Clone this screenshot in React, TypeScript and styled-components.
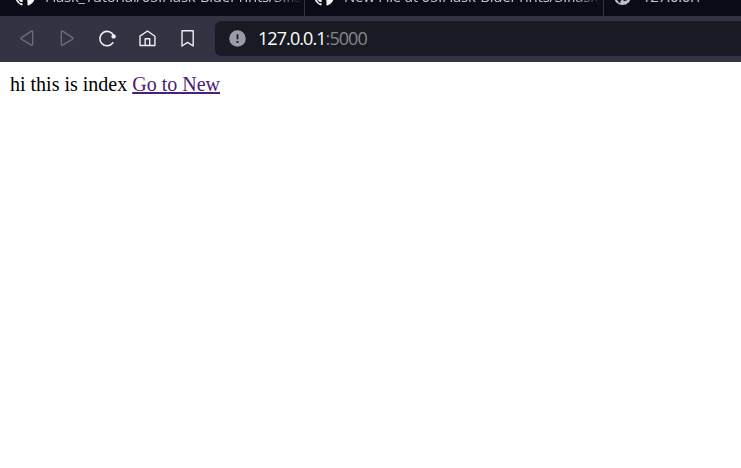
import React from "react";
import styled, { createGlobalStyle } from "styled-components";

const GlobalStyle = createGlobalStyle`
  html, body { margin: 0; height: 100%; overflow: hidden; background: #fff; }
`;

const Browser = styled.div`
  display: flex;
  flex-direction: column;
  height: 468px;
  overflow: hidden;
`;

const TabStrip = styled.div`
  display: flex;
  align-items: flex-end;
  flex: none;
  height: 16px;
  background: #0b0a17;
  overflow: hidden;
`;

const Tab = styled.div<{ $width: number; $pad: number; $gap: number }>`
  box-sizing: border-box;
  flex: none;
  display: flex;
  align-items: center;
  gap: ${(p) => p.$gap}px;
  width: ${(p) => p.$width}px;
  height: 40px;
  padding-left: ${(p) => p.$pad}px;
  border-right: 1px solid #34343f;

  svg { flex: none; }
  &:last-child { border-right: 0; }
`;

const TabTitle = styled.span<{ $width: number; $spacing: number; $fade?: boolean }>`
  width: ${(p) => p.$width}px;
  overflow: hidden;
  white-space: nowrap;
  font: 15px/24px "Open Sans", "Noto Sans", sans-serif;
  letter-spacing: ${(p) => p.$spacing}px;
  color: #c4c4ca;
  mask-image: ${(p) => (p.$fade ? "linear-gradient(to right, #000 calc(100% - 28px), transparent)" : "none")};
`;

const Toolbar = styled.div`
  box-sizing: border-box;
  display: flex;
  align-items: center;
  flex: none;
  height: 46px;
  padding: 5px 0 6px 7px;
  background: #323443;
`;

const ToolButton = styled.button<{ $muted?: boolean }>`
  display: flex;
  align-items: center;
  justify-content: center;
  width: 40px;
  height: 35px;
  padding: 0;
  border: 0;
  background: none;
  color: ${(p) => (p.$muted ? "#6d6f7c" : "#eeeff4")};
`;

const AddressBar = styled.div`
  box-sizing: border-box;
  display: flex;
  align-items: center;
  flex: 1;
  height: 35px;
  margin-left: 8px;
  padding-left: 14px;
  gap: 12px;
  border-radius: 6px 0 0 6px;
  background: #181b23;
`;

const Address = styled.span`
  padding-bottom: 2px;
  font: 18px/24px "Open Sans", "Noto Sans", sans-serif;
  letter-spacing: -0.93px;
  color: #fff;
`;

const Port = styled.span`
  color: #85878b;
`;

const Page = styled.main`
  flex: 1;
  padding: 11px 10px;
  background: #fff;
  color: #000;
  font: 20px/23px "Liberation Serif", serif;
`;

const PageLink = styled.a`
  color: #4b2078;
  text-decoration: underline;
  text-decoration-thickness: 2px;
  text-underline-offset: 1px;
  text-decoration-skip-ink: none;
`;

const GitHubIcon = () => (
  <svg width="20" height="20" viewBox="0 0 16 16" fill="#f5f5f7">
    <path d="M8 0C3.58 0 0 3.58 0 8c0 3.54 2.29 6.53 5.47 7.59.4.07.55-.17.55-.38 0-.19-.01-.82-.01-1.49-2.01.37-2.53-.49-2.69-.94-.09-.23-.48-.94-.82-1.13-.28-.15-.68-.52-.01-.53.63-.01 1.08.58 1.23.82.72 1.21 1.87.87 2.33.66.07-.52.28-.87.51-1.07-1.78-.2-3.64-.89-3.64-3.95 0-.87.31-1.59.82-2.15-.08-.2-.36-1.02.08-2.12 0 0 .67-.21 2.2.82a7.5 7.5 0 0 1 4 0c1.53-1.04 2.2-.82 2.2-.82.44 1.1.16 1.92.08 2.12.51.56.82 1.27.82 2.15 0 3.07-1.87 3.75-3.65 3.95.29.25.54.73.54 1.48 0 1.07-.01 1.93-.01 2.2 0 .21.15.46.55.38A8.01 8.01 0 0 0 16 8c0-4.42-3.58-8-8-8Z" />
  </svg>
);

const GlobeIcon = () => (
  <svg width="17" height="20" viewBox="0 0 17 20">
    <circle cx="8.5" cy="10.8" r="8.3" fill="#bfc1c5" />
    <path d="M2.200 9l3.800 2.500 2.500.5-.5 2-1.700 1 .2 2.200C4 16.300 1.900 13.300 2.200 9ZM9 4l5 3 .8 4-1.700 3.300-3.400 1-.4-2.300 2-1.600-3-1.500Z" fill="#0b0a17" />
  </svg>
);

const TriangleIcon = ({ flipped }: { flipped?: boolean }) => (
  <svg width="20" height="20" viewBox="0 0 20 20" fill="none" stroke="currentColor" strokeWidth="1.3" strokeLinejoin="round">
    <path
      d="M4.600 8.600 14 2.400Q15.700 1.300 15.700 3.200V15.100Q15.700 17 14 15.900L4.600 10.300Q3.300 9.500 4.600 8.600Z"
      transform={flipped ? "matrix(-1 0 0 1 20 0)" : undefined}
    />
  </svg>
);

const ReloadIcon = () => (
  <svg width="20" height="20" viewBox="0 0 20 20" fill="none">
    <path d="M16.800 7A7.200 7.200 0 1 0 15.900 13.800" stroke="currentColor" strokeWidth="1.600" strokeLinecap="round" />
    <circle cx="16.600" cy="7.400" r="2.200" fill="currentColor" />
  </svg>
);

const HomeIcon = () => (
  <svg width="20" height="20" viewBox="0 0 20 20" fill="none" stroke="currentColor" strokeWidth="1.400" strokeLinejoin="round">
    <path d="M3 7.200 10.500 2l7.400 5.200v9.300H3Z" />
    <path d="M8.200 16.500V9.800h4.500v6.700" />
  </svg>
);

const BookmarkIcon = () => (
  <svg width="20" height="20" viewBox="0 0 20 20" fill="none" stroke="currentColor" strokeWidth="1.400" strokeLinejoin="round">
    <path d="M5 1.800h11.200v15.200L10.600 13.400 5 17Z" />
  </svg>
);

const SiteInfoIcon = () => (
  <svg width="17" height="17" viewBox="0 0 17 17">
    <circle cx="8.500" cy="8.500" r="8.300" fill="#9a9ca5" />
    <path d="M8.500 4.200v5.100M8.500 11v1.900" stroke="#181b23" strokeWidth="1.800" />
  </svg>
);

export default function App() {
  return (
    <Browser>
      <GlobalStyle />
      <TabStrip>
        <Tab $width={305} $pad={15} $gap={10}>
          <GitHubIcon />
          <TabTitle $width={257} $spacing={-0.28} $fade>Flask_Tutorial/05.Flask-BluePrints/3.flask_</TabTitle>
        </Tab>
        <Tab $width={299} $pad={9} $gap={10}>
          <GitHubIcon />
          <TabTitle $width={258} $spacing={-0.24} $fade>New File at 05.Flask-BluePrints/3.flask_</TabTitle>
        </Tab>
        <Tab $width={137} $pad={10} $gap={11}>
          <GlobeIcon />
          <TabTitle $width={90} $spacing={-0.4}>127.0.0.1</TabTitle>
        </Tab>
      </TabStrip>
      <Toolbar>
        <ToolButton $muted aria-label="Back"><TriangleIcon /></ToolButton>
        <ToolButton $muted aria-label="Forward"><TriangleIcon flipped /></ToolButton>
        <ToolButton aria-label="Reload"><ReloadIcon /></ToolButton>
        <ToolButton aria-label="Home"><HomeIcon /></ToolButton>
        <ToolButton aria-label="Bookmark"><BookmarkIcon /></ToolButton>
        <AddressBar>
          <SiteInfoIcon />
          <Address>127.0.0.1<Port>:5000</Port></Address>
        </AddressBar>
      </Toolbar>
      <Page>
        hi this is index <PageLink href="#">Go to New</PageLink>
      </Page>
    </Browser>
  );
}
